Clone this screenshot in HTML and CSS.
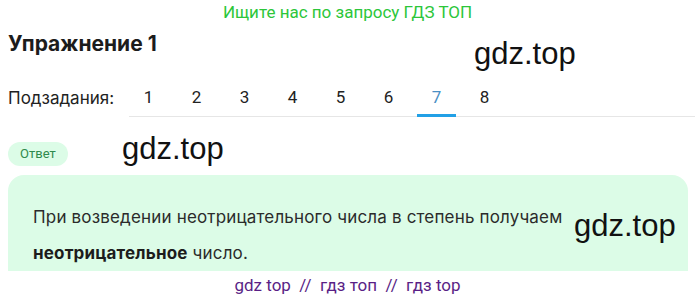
FILE: index.html
```html
<!DOCTYPE html>
<html lang="ru">

<head>
    <meta charset="UTF-8" />
    <meta name="viewport" content="width=device-width, initial-scale=1.0" />
    <title>Упражнение 1 - ГДЗ ТОП</title>
    <link rel="stylesheet" href="styles.css">
</head>

<body>
    <!-- Баннер -->
    <div class="promo">Ищите нас по запросу ГДЗ ТОП</div>

    <div class="task">
        <h1 class="task-title">Упражнение 1</h1>

        <!-- Подзадания -->
        <div class="subtasks">
            <span class="subtasks-label">Подзадания:</span>
            <nav class="tabs">
                <a class="tab">1</a>
                <a class="tab">2</a>
                <a class="tab">3</a>
                <a class="tab">4</a>
                <a class="tab">5</a>
                <a class="tab">6</a>
                <a class="tab active">7</a>
                <a class="tab">8</a>
            </nav>
        </div>

        <span class="answer-pill">Ответ</span>

        <div class="answer-box">
            <p class="answer-text">
                При возведении неотрицательного числа в степень получаем
                <br />
                <b>неотрицательное</b> число.
            </p>
        </div>
    </div>

    <div class="footer-links">gdz top &nbsp;//&nbsp; гдз топ &nbsp;//&nbsp; гдз top</div>

    <!-- Водяные знаки -->
    <span class="watermark wm-1">gdz.top</span>
    <span class="watermark wm-2">gdz.top</span>
    <span class="watermark wm-3">gdz.top</span>
</body>

</html>
```

FILE: styles.css
```css
html,
body {
    margin: 0;
    padding: 0;
    background: #fff;
    overflow: hidden;
}

body {
    position: relative;
    font-family: 'Inter', 'Noto Sans', sans-serif;
    color: #222;
}

.promo {
    height: 24px;
    line-height: 24px;
    text-align: center;
    font-family: 'Roboto', sans-serif;
    font-size: 17px;
    color: #2cc63a;
}

.task {
    padding: 0 7px 0 8px;
}

.task-title {
    margin: 6px 0 0 0;
    font-size: 21px;
    line-height: 28px;
    font-weight: 700;
    color: #1c1c1c;
}

/* Подзадания */
.subtasks {
    display: flex;
    align-items: flex-end;
    margin-top: 20px;
    margin-right: -7px;
}

.subtasks-label {
    width: 121px;
    font-size: 17px;
    line-height: 38px;
    color: #222;
}

.tabs {
    flex: 1;
    display: flex;
    gap: 9px;
    border-bottom: 1px solid #e6e6e6;
}

.tab {
    position: relative;
    width: 39px;
    height: 38px;
    line-height: 38px;
    text-align: center;
    font-family: 'Roboto', sans-serif;
    font-size: 17px;
    color: #222;
    cursor: pointer;
}

.tab.active {
    color: #4a8fc4;
}

.tab.active::after {
    content: '';
    position: absolute;
    left: 0;
    right: 0;
    bottom: -1px;
    height: 3px;
    background: #22a0e6;
}

.answer-pill {
    display: inline-block;
    margin-top: 25px;
    padding: 0 12px;
    height: 24px;
    line-height: 24px;
    border-radius: 12px;
    background: #dcfce7;
    font-family: 'Roboto', sans-serif;
    font-size: 13px;
    color: #2f8a4c;
}

.answer-box {
    margin-top: 9px;
    height: 96px;
    overflow: hidden;
    padding: 24px 25px 0 25px;
    box-sizing: border-box;
    border-radius: 16px 16px 0 0;
    background: #dcfce7;
}

.answer-text {
    margin: 0;
    font-size: 17px;
    line-height: 36px;
    letter-spacing: 0.17px;
    color: #2b2b2b;
}

.answer-text b {
    font-weight: 700;
    color: #1c1c1c;
}

.footer-links {
    height: 28px;
    line-height: 28px;
    text-align: center;
    font-family: 'Roboto', sans-serif;
    font-size: 17px;
    color: #5a1f86;
}

.watermark {
    position: absolute;
    font-family: 'Liberation Sans', Arial, sans-serif;
    font-size: 31px;
    line-height: 1;
    color: #111;
    pointer-events: none;
}

.wm-1 {
    top: 38px;
    left: 474px;
}

.wm-2 {
    top: 133px;
    left: 122px;
}

.wm-3 {
    top: 210px;
    left: 574px;
}
```
